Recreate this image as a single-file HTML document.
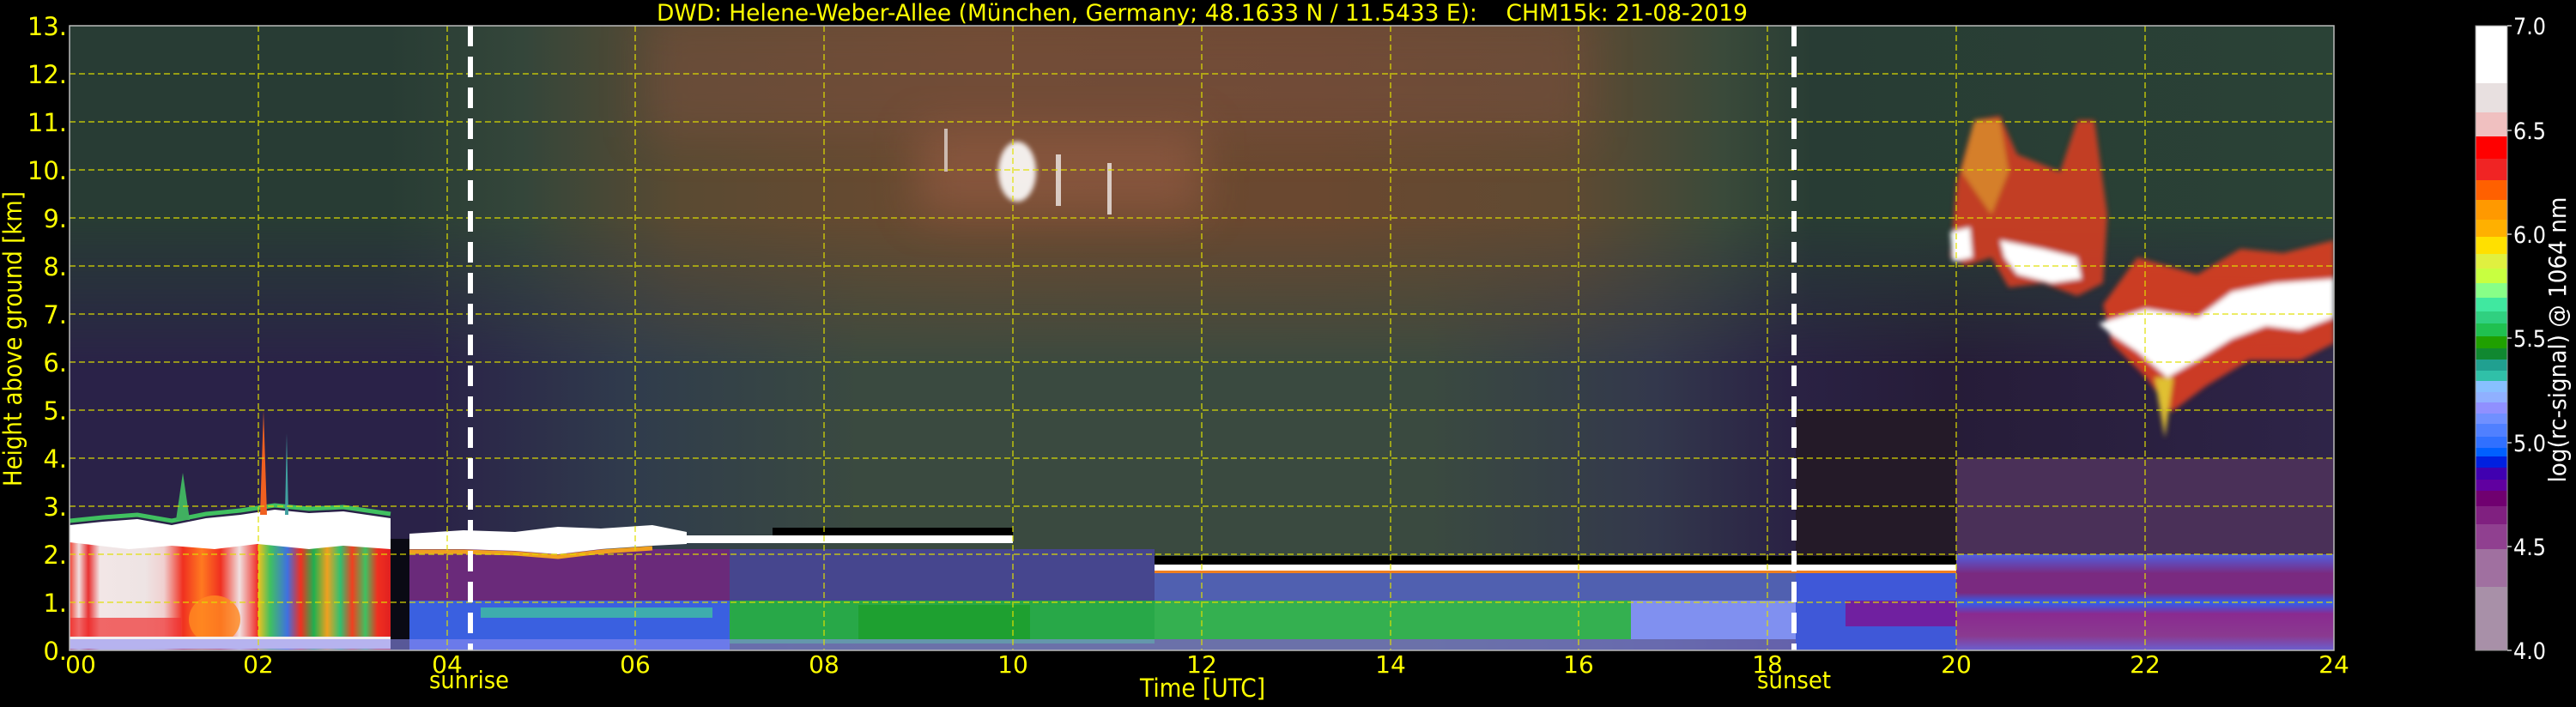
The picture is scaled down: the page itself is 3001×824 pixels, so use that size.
<!DOCTYPE html>
<html><head><meta charset="utf-8">
<style>
html,body{margin:0;padding:0;background:#000;}
svg{display:block;}
text{font-family:"DejaVu Sans","Liberation Sans",sans-serif;fill:#ffff00;}
</style></head>
<body>
<svg width="3001" height="824" viewBox="0 0 3001 824" xmlns="http://www.w3.org/2000/svg">
<defs>
<filter id="blur" x="-20%" y="-50%" width="140%" height="200%"><feGaussianBlur stdDeviation="25"/></filter>
<filter id="blur2" x="-20%" y="-20%" width="140%" height="140%"><feGaussianBlur stdDeviation="3"/></filter>
<linearGradient id="gUp" gradientUnits="userSpaceOnUse" x1="81" y1="0" x2="2719" y2="0">
<stop offset="0" stop-color="#283c34"/><stop offset="0.14" stop-color="#283c34"/>
<stop offset="0.2" stop-color="#34463a"/><stop offset="0.27" stop-color="#5a4a32"/>
<stop offset="0.4" stop-color="#6c4a30"/><stop offset="0.55" stop-color="#6a4830"/>
<stop offset="0.66" stop-color="#604a32"/><stop offset="0.73" stop-color="#3a4a3a"/>
<stop offset="0.77" stop-color="#283c34"/><stop offset="1" stop-color="#2a4236"/>
</linearGradient>
<linearGradient id="gMid" gradientUnits="userSpaceOnUse" x1="81" y1="0" x2="2719" y2="0">
<stop offset="0" stop-color="#2a2248"/><stop offset="0.16" stop-color="#2a2248"/>
<stop offset="0.25" stop-color="#303c4c"/><stop offset="0.35" stop-color="#3a4a40"/>
<stop offset="0.6" stop-color="#3a4a40"/><stop offset="0.7" stop-color="#33384c"/>
<stop offset="0.76" stop-color="#2a2244"/><stop offset="0.83" stop-color="#261c38"/>
<stop offset="1" stop-color="#2e2448"/>
</linearGradient>
<linearGradient id="gFade" x1="0" y1="0" x2="0" y2="1">
<stop offset="0" stop-color="#fff" stop-opacity="0"/><stop offset="0.45" stop-color="#fff" stop-opacity="1"/><stop offset="1" stop-color="#fff" stop-opacity="1"/>
</linearGradient>
<mask id="mFade" maskUnits="userSpaceOnUse" x="81" y="254" width="2638" height="400">
<rect x="81" y="254" width="2638" height="392" fill="url(#gFade)"/>
</mask>
<linearGradient id="gStripe" gradientUnits="userSpaceOnUse" x1="301" y1="0" x2="455" y2="0">
<stop offset="0" stop-color="#f0c020"/><stop offset="0.09" stop-color="#40c060"/>
<stop offset="0.22" stop-color="#4070e0"/><stop offset="0.32" stop-color="#f03020"/>
<stop offset="0.42" stop-color="#20b050"/><stop offset="0.52" stop-color="#f0a020"/>
<stop offset="0.62" stop-color="#30c070"/><stop offset="0.71" stop-color="#f04020"/>
<stop offset="0.81" stop-color="#40c060"/><stop offset="0.9" stop-color="#f03020"/>
<stop offset="1" stop-color="#e02020"/>
</linearGradient>
<linearGradient id="gLeft" gradientUnits="userSpaceOnUse" x1="81" y1="0" x2="301" y2="0">
<stop offset="0" stop-color="#f04030"/><stop offset="0.05" stop-color="#f0e0e0"/>
<stop offset="0.1" stop-color="#e83030"/><stop offset="0.16" stop-color="#f2e6e6"/>
<stop offset="0.4" stop-color="#eee4e4"/><stop offset="0.5" stop-color="#f0d0d0"/>
<stop offset="0.6" stop-color="#f03020"/><stop offset="0.7" stop-color="#ff7a20"/>
<stop offset="0.8" stop-color="#f03020"/><stop offset="0.9" stop-color="#f0e0e0"/>
<stop offset="1" stop-color="#f02820"/>
</linearGradient>
<linearGradient id="gNightLow" x1="0" y1="0" x2="0" y2="1">
<stop offset="0" stop-color="#5060e0"/><stop offset="0.2" stop-color="#7a2a80"/>
<stop offset="0.4" stop-color="#7a2a80"/><stop offset="0.5" stop-color="#3060f0"/>
<stop offset="0.62" stop-color="#8a2a90"/><stop offset="0.85" stop-color="#8a3a90"/>
<stop offset="1" stop-color="#6a60d0"/>
</linearGradient>
<clipPath id="plot"><rect x="81" y="30" width="2638" height="728"/></clipPath>
</defs>

<g clip-path="url(#plot)">
<!-- plot background -->
<rect x="81" y="30" width="2638" height="728" fill="url(#gUp)"/>
<rect x="81" y="254" width="2638" height="392" fill="url(#gMid)" mask="url(#mFade)"/>
<rect x="81" y="600" width="2638" height="158" fill="url(#gMid)"/>
<rect x="750" y="20" width="1100" height="140" fill="#7a5040" opacity="0.45" filter="url(#blur)"/>
<rect x="2092" y="478" width="187" height="180" fill="#241a28"/>
<rect x="2279" y="534" width="440" height="112" fill="#4a3058"/>

<!-- A: 0-2h low -->
<rect x="81" y="612" width="220" height="146" fill="url(#gLeft)"/>
<rect x="81" y="720" width="130" height="22" fill="#f03030" opacity="0.7"/>
<ellipse cx="250" cy="722" rx="30" ry="28" fill="#ff8a20" opacity="0.8"/>
<rect x="301" y="628" width="154" height="130" fill="url(#gStripe)"/>
<polygon points="81,612 120,608 160,605 200,612 240,604 280,600 320,594 360,598 400,596 455,604 455,640 400,636 360,640 300,634 250,640 200,636 150,640 81,632" fill="#ffffff"/>
<polyline points="81,607 120,603 160,600 200,607 240,599 280,595 320,589 360,593 400,591 455,599" fill="none" stroke="#40c060" stroke-width="5"/>
<polygon points="205,606 213,551 221,606" fill="#40b060"/>
<polygon points="303,600 307,478 311,600" fill="#f06020"/>
<polygon points="332,600 334,505 336,600" fill="#40a0a0"/>
<rect x="81" y="742" width="374" height="14" fill="#f4eeee"/>
<rect x="455" y="628" width="22" height="130" fill="#0a0a14"/>

<!-- E: 3.6-18.3h low -->
<rect x="477" y="640" width="373" height="60" fill="#6a2a7a"/>
<rect x="850" y="640" width="495" height="62" fill="#46468e"/>
<rect x="477" y="700" width="373" height="58" fill="#3a60e0"/>
<rect x="560" y="708" width="270" height="12" fill="#40c0a0" opacity="0.8"/>
<rect x="850" y="700" width="495" height="50" fill="#28a848"/>
<rect x="1000" y="705" width="200" height="40" fill="#1ea030"/>
<rect x="1345" y="664" width="747" height="38" fill="#5060b0"/>
<rect x="1345" y="700" width="555" height="45" fill="#34b050"/>
<rect x="1900" y="700" width="192" height="45" fill="#8090f0"/>
<rect x="81" y="745" width="2638" height="13" fill="#8c8cf0" opacity="0.6"/>
<polygon points="477,622 540,618 600,620 650,614 700,616 760,612 800,620 800,634 760,636 700,640 650,646 600,642 540,640 477,640" fill="#ffffff"/>
<polyline points="477,643 540,643 600,645 650,649 700,643 760,639" fill="none" stroke="#f0a020" stroke-width="5"/>
<rect x="800" y="624" width="380" height="9" fill="#ffffff"/>
<rect x="900" y="615" width="280" height="9" fill="#000"/>
<rect x="1345" y="648" width="934" height="10" fill="#000"/>
<rect x="1345" y="658" width="934" height="7" fill="#fff"/>
<rect x="1345" y="665" width="934" height="3" fill="#f08020"/>
<rect x="2092" y="668" width="187" height="90" fill="#3f58d8"/>
<rect x="2150" y="700" width="129" height="30" fill="#7020a0"/>
<rect x="2279" y="646" width="440" height="112" fill="url(#gNightLow)"/>

<!-- I: cirrus -->
<rect x="1070" y="150" width="330" height="100" fill="#a06048" opacity="0.5" filter="url(#blur)"/>
<ellipse cx="1185" cy="200" rx="22" ry="35" fill="#fff" opacity="0.9" filter="url(#blur2)"/>
<rect x="1230" y="180" width="6" height="60" fill="#fff" opacity="0.7"/>
<rect x="1290" y="190" width="5" height="60" fill="#fff" opacity="0.7"/>
<rect x="1100" y="150" width="4" height="50" fill="#fff" opacity="0.6"/>

<!-- J: cloud 20-21.7h -->
<g filter="url(#blur2)">
<polygon points="2272,300 2280,210 2300,140 2330,135 2350,180 2400,200 2420,140 2440,140 2455,250 2450,330 2420,345 2380,330 2340,335 2320,300 2290,310" fill="#e84020" opacity="0.8"/>
<polygon points="2285,200 2300,140 2330,140 2340,200 2320,250" fill="#e8c030" opacity="0.5"/>
<polygon points="2272,270 2295,265 2298,300 2275,305" fill="#fff"/>
<polygon points="2330,280 2380,290 2420,300 2425,325 2390,330 2350,320 2335,300" fill="#fff"/>
<polygon points="2450,355 2490,300 2560,320 2610,290 2660,295 2719,280 2719,400 2680,420 2620,420 2570,450 2530,480 2500,440 2460,400" fill="#e84020" opacity="0.85"/>
<polygon points="2445,377 2500,360 2560,370 2600,340 2650,330 2719,325 2719,370 2680,385 2640,380 2600,395 2560,420 2525,440 2490,410 2460,390" fill="#ffffff"/>
<polygon points="2510,440 2522,510 2532,440" fill="#e0c030"/>
</g>
</g>

<!-- grid -->
<g stroke="#e0e000" stroke-width="1.5" stroke-dasharray="7,4" opacity="0.8">
<line x1="81" y1="702" x2="2719" y2="702"/><line x1="81" y1="646" x2="2719" y2="646"/>
<line x1="81" y1="590" x2="2719" y2="590"/><line x1="81" y1="534" x2="2719" y2="534"/>
<line x1="81" y1="478" x2="2719" y2="478"/><line x1="81" y1="422" x2="2719" y2="422"/>
<line x1="81" y1="366" x2="2719" y2="366"/><line x1="81" y1="310" x2="2719" y2="310"/>
<line x1="81" y1="254" x2="2719" y2="254"/><line x1="81" y1="198" x2="2719" y2="198"/>
<line x1="81" y1="142" x2="2719" y2="142"/><line x1="81" y1="86" x2="2719" y2="86"/>
<line x1="301" y1="30" x2="301" y2="758"/><line x1="521" y1="30" x2="521" y2="758"/>
<line x1="740" y1="30" x2="740" y2="758"/><line x1="960" y1="30" x2="960" y2="758"/>
<line x1="1180" y1="30" x2="1180" y2="758"/><line x1="1400" y1="30" x2="1400" y2="758"/>
<line x1="1620" y1="30" x2="1620" y2="758"/><line x1="1839" y1="30" x2="1839" y2="758"/>
<line x1="2059" y1="30" x2="2059" y2="758"/><line x1="2279" y1="30" x2="2279" y2="758"/>
<line x1="2499" y1="30" x2="2499" y2="758"/>
</g>
<g stroke="#fff" stroke-width="6" stroke-dasharray="24,12">
<line x1="548" y1="30" x2="548" y2="758"/><line x1="2090" y1="30" x2="2090" y2="758"/>
</g>
<rect x="81" y="30" width="2638" height="728" fill="none" stroke="#bbb" stroke-width="1.5"/>

<!-- title -->
<text x="765" y="24" font-size="27" xml:space="preserve" style="white-space:pre" textLength="1271" lengthAdjust="spacingAndGlyphs">DWD: Helene-Weber-Allee (München, Germany; 48.1633 N / 11.5433 E):&#160;&#160;&#160;&#160;CHM15k: 21-08-2019</text>

<g font-size="29" text-anchor="end">
<text x="78" y="41">13.</text><text x="78" y="97">12.</text><text x="78" y="153">11.</text>
<text x="78" y="209">10.</text><text x="78" y="265">9.</text><text x="78" y="321">8.</text>
<text x="78" y="377">7.</text><text x="78" y="433">6.</text><text x="78" y="489">5.</text>
<text x="78" y="545">4.</text><text x="78" y="601">3.</text><text x="78" y="657">2.</text>
<text x="78" y="713">1.</text><text x="78" y="769">0.</text>
</g>
<text transform="translate(25,395) rotate(-90)" font-size="29" text-anchor="middle" textLength="344" lengthAdjust="spacingAndGlyphs">Height above ground [km]</text>

<g font-size="28" text-anchor="middle">
<text x="94" y="784">00</text><text x="301" y="784">02</text><text x="521" y="784">04</text>
<text x="740" y="784">06</text><text x="960" y="784">08</text><text x="1180" y="784">10</text>
<text x="1400" y="784">12</text><text x="1620" y="784">14</text><text x="1839" y="784">16</text>
<text x="2059" y="784">18</text><text x="2279" y="784">20</text><text x="2499" y="784">22</text>
<text x="2719" y="784">24</text>
</g>
<text x="500" y="802" font-size="28" textLength="93" lengthAdjust="spacingAndGlyphs">sunrise</text>
<text x="2047" y="802" font-size="28" textLength="86" lengthAdjust="spacingAndGlyphs">sunset</text>
<text x="1328" y="812" font-size="29" textLength="146" lengthAdjust="spacingAndGlyphs">Time [UTC]</text>

<g>
<rect x="2884" y="30" width="37" height="67" fill="#ffffff"/>
<rect x="2884" y="97" width="37" height="34" fill="#e8e0e0"/>
<rect x="2884" y="131" width="37" height="28" fill="#f0c0c0"/>
<rect x="2884" y="159" width="37" height="26" fill="#ff0000"/>
<rect x="2884" y="185" width="37" height="25" fill="#f02424"/>
<rect x="2884" y="210" width="37" height="23" fill="#ff6000"/>
<rect x="2884" y="233" width="37" height="23" fill="#ff9900"/>
<rect x="2884" y="256" width="37" height="20" fill="#ffb000"/>
<rect x="2884" y="276" width="37" height="20" fill="#ffe000"/>
<rect x="2884" y="296" width="37" height="17" fill="#e0f040"/>
<rect x="2884" y="313" width="37" height="17" fill="#c8ff40"/>
<rect x="2884" y="330" width="37" height="17" fill="#88ff88"/>
<rect x="2884" y="347" width="37" height="16" fill="#40e8a0"/>
<rect x="2884" y="363" width="37" height="14" fill="#30d080"/>
<rect x="2884" y="377" width="37" height="15" fill="#20c050"/>
<rect x="2884" y="392" width="37" height="14" fill="#20a000"/>
<rect x="2884" y="406" width="37" height="13" fill="#108830"/>
<rect x="2884" y="419" width="37" height="13" fill="#20a090"/>
<rect x="2884" y="432" width="37" height="12" fill="#30c0a8"/>
<rect x="2884" y="444" width="37" height="13" fill="#88c0ff"/>
<rect x="2884" y="457" width="37" height="12" fill="#90b0ff"/>
<rect x="2884" y="469" width="37" height="13" fill="#9090ff"/>
<rect x="2884" y="482" width="37" height="12" fill="#7090ff"/>
<rect x="2884" y="494" width="37" height="15" fill="#5080ff"/>
<rect x="2884" y="509" width="37" height="13" fill="#3070ff"/>
<rect x="2884" y="522" width="37" height="10" fill="#0060ff"/>
<rect x="2884" y="532" width="37" height="13" fill="#0020e0"/>
<rect x="2884" y="545" width="37" height="14" fill="#4000b0"/>
<rect x="2884" y="559" width="37" height="13" fill="#6000a0"/>
<rect x="2884" y="572" width="37" height="18" fill="#700070"/>
<rect x="2884" y="590" width="37" height="21" fill="#802080"/>
<rect x="2884" y="611" width="37" height="29" fill="#904090"/>
<rect x="2884" y="640" width="37" height="44" fill="#a070a0"/>
<rect x="2884" y="684" width="37" height="74" fill="#a890a8"/>
<rect x="2884" y="30" width="37" height="728" fill="none" stroke="#999" stroke-width="1"/>
</g>
<g stroke="#ccc" stroke-width="1.5">
<line x1="2921" y1="30" x2="2926" y2="30"/><line x1="2921" y1="152" x2="2926" y2="152"/>
<line x1="2921" y1="273" x2="2926" y2="273"/><line x1="2921" y1="394" x2="2926" y2="394"/>
<line x1="2921" y1="516" x2="2926" y2="516"/><line x1="2921" y1="637" x2="2926" y2="637"/>
<line x1="2921" y1="758" x2="2926" y2="758"/>
</g>
<g font-size="27">
<text x="2928" y="40" style="fill:#fff" textLength="38" lengthAdjust="spacingAndGlyphs">7.0</text>
<text x="2928" y="162" style="fill:#fff" textLength="38" lengthAdjust="spacingAndGlyphs">6.5</text>
<text x="2928" y="283" style="fill:#fff" textLength="38" lengthAdjust="spacingAndGlyphs">6.0</text>
<text x="2928" y="404" style="fill:#fff" textLength="38" lengthAdjust="spacingAndGlyphs">5.5</text>
<text x="2928" y="526" style="fill:#fff" textLength="38" lengthAdjust="spacingAndGlyphs">5.0</text>
<text x="2928" y="647" style="fill:#fff" textLength="38" lengthAdjust="spacingAndGlyphs">4.5</text>
<text x="2928" y="768" style="fill:#fff" textLength="38" lengthAdjust="spacingAndGlyphs">4.0</text>
</g>
<text transform="translate(2989,396) rotate(-90)" font-size="28" text-anchor="middle" style="fill:#fff" textLength="333" lengthAdjust="spacingAndGlyphs">log(rc-signal) @ 1064 nm</text>
</svg>
</body></html>
